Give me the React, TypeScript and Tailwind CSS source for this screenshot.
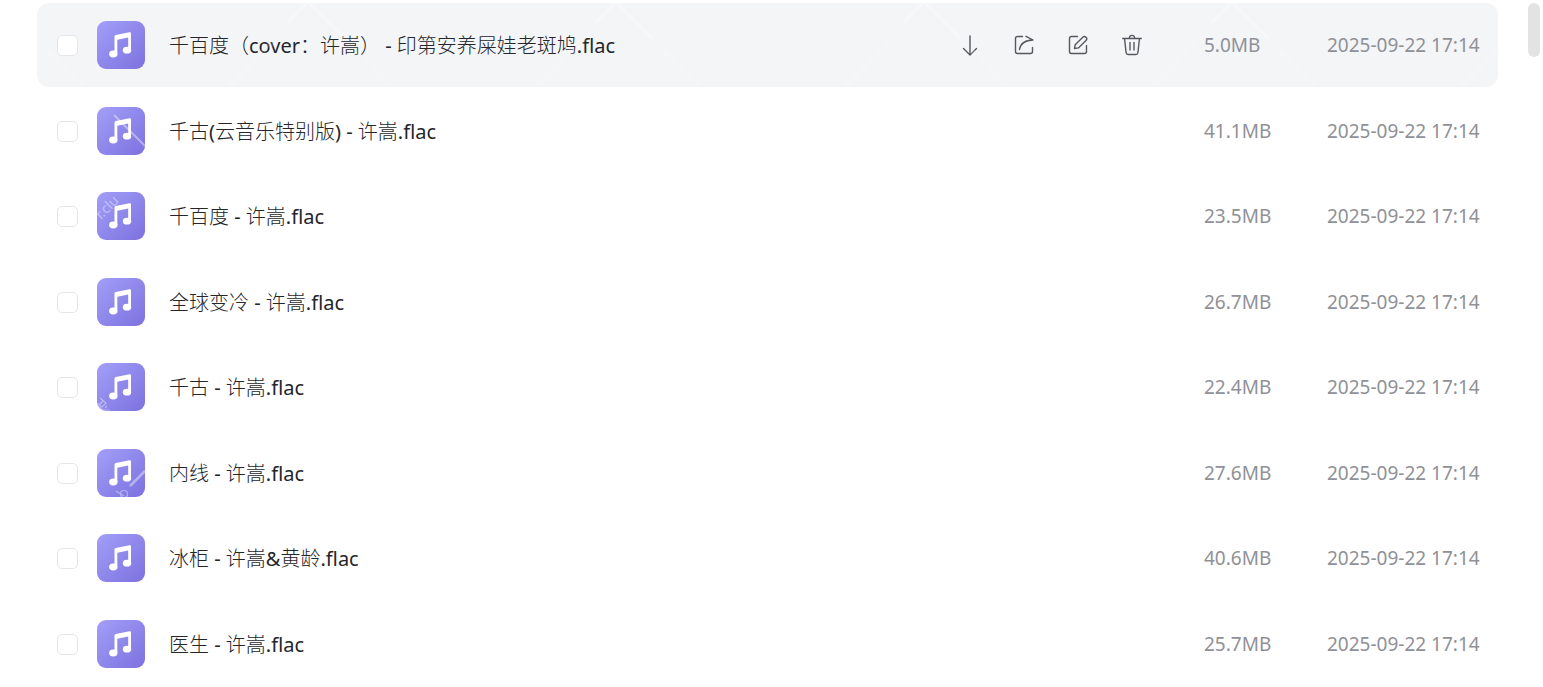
import type { ReactNode } from 'react';

interface FileItem {
  name: string;
  size: string;
  date: string;
  active?: boolean;
  mark?: ReactNode;
}

const files: FileItem[] = [
  { name: '千百度（cover：许嵩） - 印第安养屎娃老斑鸠.flac', size: '5.0MB', date: '2025-09-22 17:14', active: true },
  {
    name: '千古(云音乐特别版) - 许嵩.flac',
    size: '41.1MB',
    date: '2025-09-22 17:14',
    mark: <path d="M17 8 48 39" strokeWidth="2" />,
  },
  {
    name: '千百度 - 许嵩.flac',
    size: '23.5MB',
    date: '2025-09-22 17:14',
    mark: (
      <text x="4" y="28" transform="rotate(-45 4 28)" fontSize="14" fill="#fff" stroke="none">
        r.clu
      </text>
    ),
  },
  { name: '全球变冷 - 许嵩.flac', size: '26.7MB', date: '2025-09-22 17:14' },
  {
    name: '千古 - 许嵩.flac',
    size: '22.4MB',
    date: '2025-09-22 17:14',
    mark: <path d="m3 35 6 5-4 4-5-4M6 38l-4 4M1 43l5 4 7 0M8 45l2-2" strokeWidth="1.200" />,
  },
  {
    name: '内线 - 许嵩.flac',
    size: '27.6MB',
    date: '2025-09-22 17:14',
    mark: (
      <>
        <path d="M33 37 48 22" strokeWidth="2.500" />
        <path d="m19 42 8 5" strokeWidth="1.200" />
        <circle cx="27" cy="45" r="3.500" strokeWidth="1.200" />
      </>
    ),
  },
  { name: '冰柜 - 许嵩&黄龄.flac', size: '40.6MB', date: '2025-09-22 17:14' },
  { name: '医生 - 许嵩.flac', size: '25.7MB', date: '2025-09-22 17:14' },
];

const actions = [
  { label: '下载', d: 'M12 3v18.500M5.500 15.500 12 22l6.500-6.500' },
  {
    label: '分享',
    d: 'M10.500 3.500H5.500a2 2 0 0 0-2 2v13a2 2 0 0 0 2 2h13a2 2 0 0 0 2-2v-4M14 3.300l7 3.700c-7 .2-12.500 3.200-13.500 9.500',
  },
  {
    label: '重命名',
    d: 'M11.500 3.500h-6a2 2 0 0 0-2 2v13a2 2 0 0 0 2 2h13a2 2 0 0 0 2-2v-6M8.500 15.500l.7-3.800 7.600-7.500a2.200 2.200 0 0 1 3.200 3.200l-7.600 7.500-3.900.6Z',
  },
  {
    label: '删除',
    d: 'M2.700 5.500h18.600M9.300 5.500c0-4.200 5.400-4.200 5.400 0M4.500 5.500l1.600 14.200a2 2 0 0 0 2 1.800h7.800a2 2 0 0 0 2-1.800l1.600-14.200M10 9.500v7.500M14 9.500v7.500',
  },
];

function MusicIcon({ mark }: { mark?: ReactNode }) {
  return (
    <span className="size-12 shrink-0 overflow-hidden rounded-[9px] bg-linear-to-br from-[#a29ff8] to-[#7d71df]">
      <svg className="size-12" viewBox="0 0 48 48" fill="none" aria-hidden="true">
        {mark && (
          <g stroke="#fff" opacity="0.4">
            {mark}
          </g>
        )}
        <path
          d="M17.500 33V15.500q0-1.300 1.300-1.600l13.700-2.700q1.500-.3 1.500 1.200V29h-2.800V16.500l-10.900 2.200V33z"
          fill="#fff"
        />
        <ellipse cx="16.300" cy="33" rx="4.200" ry="3.400" fill="#fff" />
        <ellipse cx="30" cy="29.200" rx="4.200" ry="3.400" fill="#fff" />
      </svg>
    </span>
  );
}

function RowActions() {
  return (
    <div className="mr-[60px] flex shrink-0 gap-[30px]">
      {actions.map((action) => (
        <button key={action.label} type="button" aria-label={action.label} className="size-6 cursor-pointer text-[#55585e]">
          <svg
            className="size-6"
            viewBox="0 0 24 24"
            fill="none"
            stroke="currentColor"
            strokeWidth="1.400"
            strokeLinecap="round"
            strokeLinejoin="round"
          >
            <path d={action.d} />
          </svg>
        </button>
      ))}
    </div>
  );
}

// Faint chevrons printed over the highlighted row
function RowPattern() {
  return (
    <svg className="pointer-events-none absolute inset-0 size-full" fill="none" aria-hidden="true">
      <defs>
        <pattern id="chevrons" x="117" width="308" height="84" patternUnits="userSpaceOnUse">
          <path d="m134 19 20-20 36 36" stroke="#fff" strokeWidth="2" opacity="0.4" />
          <path d="m75 83 48-48M202 48l34 35" stroke="#fff" strokeWidth="6" strokeDasharray="7 4" opacity="0.14" />
        </pattern>
      </defs>
      <rect width="100%" height="100%" fill="url(#chevrons)" />
    </svg>
  );
}

function FileRow({ file }: { file: FileItem }) {
  return (
    <li
      className={`relative flex h-[84px] items-center overflow-hidden rounded-xl pr-[19px] pl-5 odd:mb-[2px] even:mb-px ${
        file.active ? 'bg-[#f4f5f7]' : 'hover:bg-[#f4f5f7]'
      }`}
    >
      {file.active && <RowPattern />}
      <input
        type="checkbox"
        aria-label={file.name}
        className="mr-[19px] size-[21px] shrink-0 appearance-none rounded-[5px] border border-[#e5e6e9] bg-white checked:bg-[#7d71df]"
      />
      <MusicIcon mark={file.mark} />
      <a href="#" className="ml-6 truncate pt-0.5 text-xl text-[#25262b]">
        {file.name}
      </a>
      <div className="flex-1"></div>
      {file.active && <RowActions />}
      <span className="w-[123px] shrink-0 text-[19px] text-[#8f9197]">{file.size}</span>
      <time className="w-[152px] shrink-0 text-[19px] whitespace-nowrap text-[#8f9197]">{file.date}</time>
    </li>
  );
}

export default function App() {
  return (
    <div className="flex bg-white pt-[3px] pr-[3px] pl-[37px] font-['Noto_Sans','Noto_Sans_CJK_SC_Light','Noto_Sans_CJK_SC',sans-serif]">
      <ul className="min-w-0 flex-1">
        {files.map((file) => (
          <FileRow key={file.name} file={file} />
        ))}
      </ul>
      {/* Scrollbar thumb */}
      <div className="ml-[30px] h-[54px] w-3 rounded-full bg-[#e3e3e3]"></div>
    </div>
  );
}
